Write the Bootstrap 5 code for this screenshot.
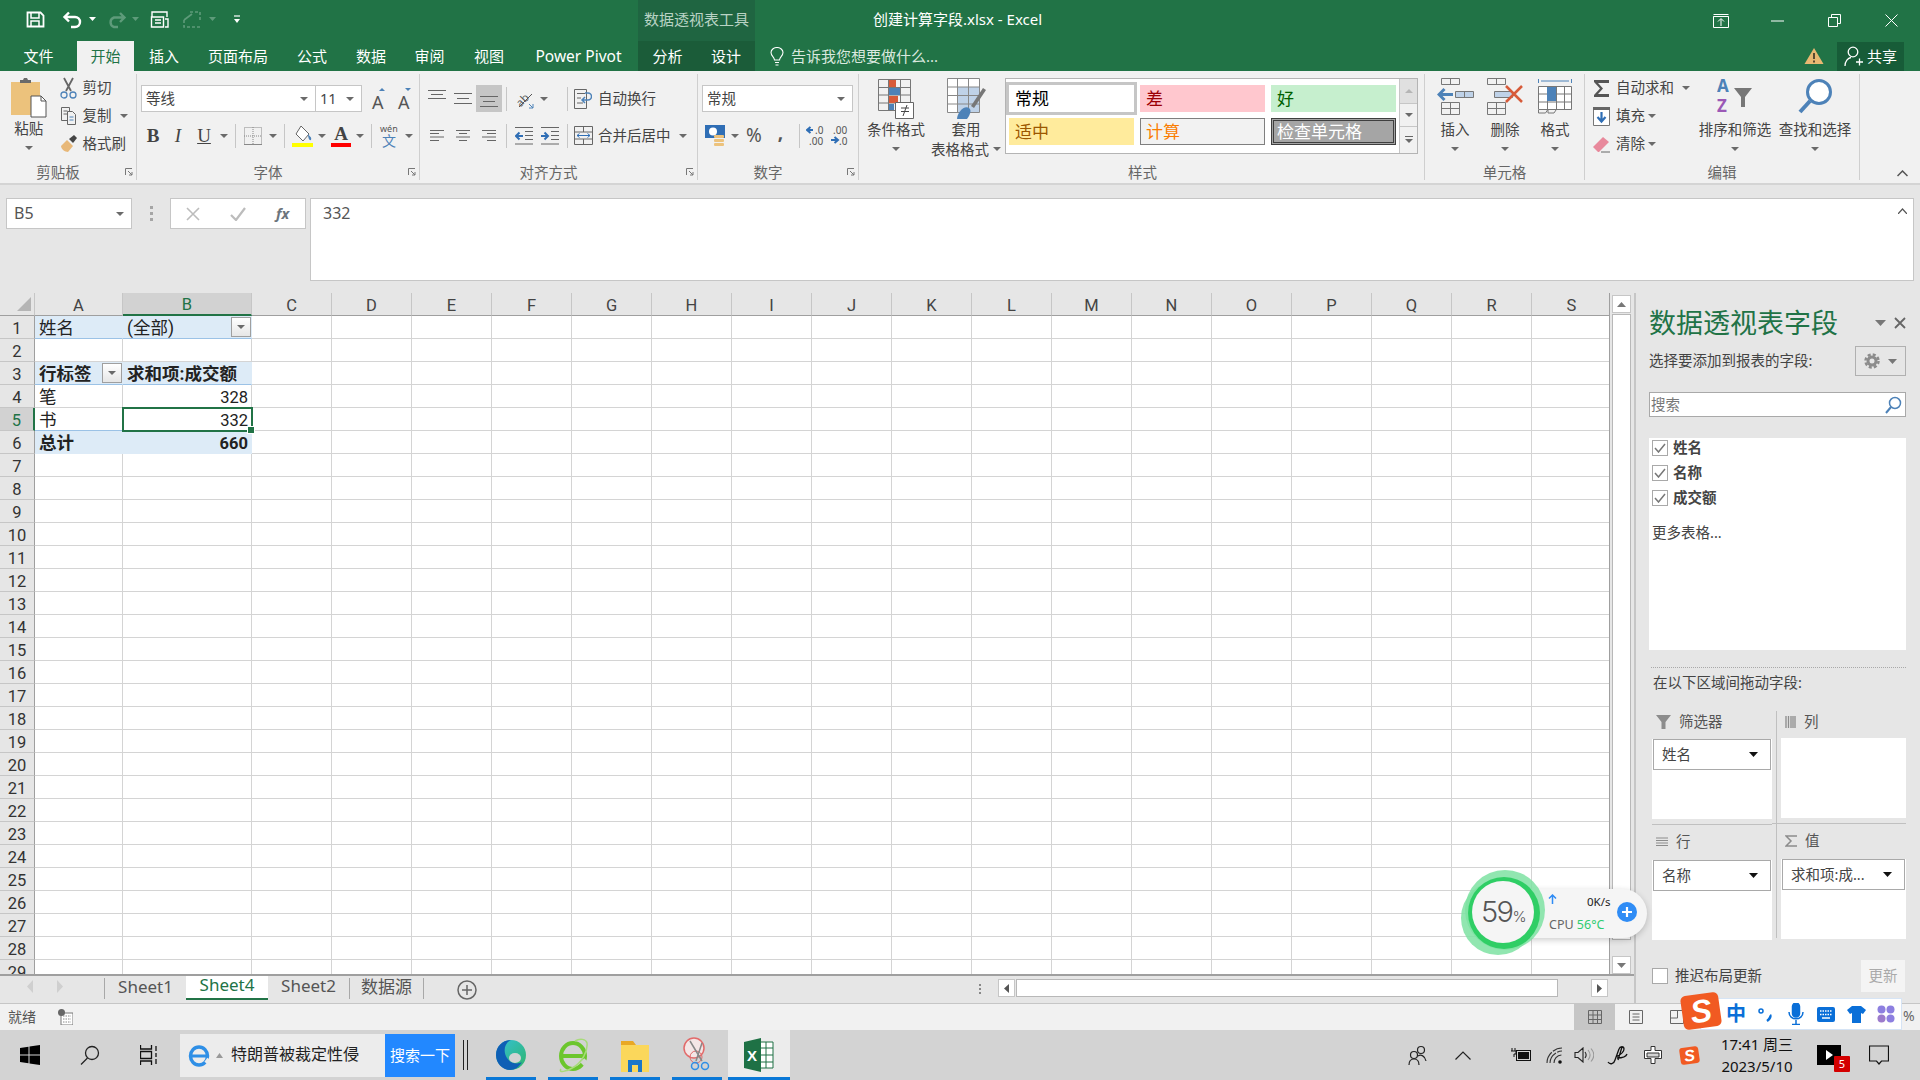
<!DOCTYPE html>
<html lang="zh-CN">
<head>
<meta charset="UTF-8">
<title>创建计算字段.xlsx - Excel</title>
<link rel="stylesheet" href="https://cdn.jsdelivr.net/npm/bootstrap@5.3.3/dist/css/bootstrap.min.css">
<script src="https://cdn.jsdelivr.net/npm/bootstrap@5.3.3/dist/js/bootstrap.bundle.min.js"></script>
<style>
html,body{margin:0;width:1920px;height:1080px;overflow:hidden}
body{font-family:"Noto Sans","Noto Sans CJK SC",sans-serif;font-size:14.5px;color:#444;background:#e6e6e6}
svg{display:block;flex:none}
.app{width:1920px;height:1080px;overflow:hidden}
.txt{white-space:nowrap;line-height:1.2}
.titlebar{height:41px;background:#217346;color:#fff}
.ctx-title{width:117px;height:41px;background:#1f6541;color:#b9d3c4;font-size:15px;padding-bottom:3px}
.doc-title{margin-left:118px;font-size:15px;padding-bottom:3px}
.winbtn{width:57px;height:41px}
.tabbar{height:30px;background:#217346;color:#fff;font-size:15px}
.rtab{height:30px}
.rtab.pp{font-size:15.5px}
.t77{width:77px}.t57{width:57px}.t60{width:60px}.t88{width:88px}.t58{width:58px}.t59{width:59px}.t119{width:119px}
.rtab.on{background:#f1f1f1;color:#217346}
.rtab.ctx{background:#1b5c39}
.tell{color:#d9e8df;margin-left:15px;font-size:15px}
.tell svg{margin-right:7px}
.warn{margin-right:13px}
.share{width:67px;height:29px;background:#175c38;margin-right:16px}
.ribbon{height:114px;background:#f1f1f1;border-bottom:2px solid #d4d4d4;padding-top:3px}
.rgroup{height:106px;border-right:1px solid #cfcfcf}
.g-clip{width:137px}.g-font{width:283px}.g-align{width:278px}.g-num{width:161px}.g-style{width:566px;padding-left:2px}.g-cell{width:160px}.g-edit{width:275px}
.rbody{height:87px}
.rlabel{height:19px;display:grid;grid-template-columns:1fr auto 1fr;align-items:center;color:#666;font-size:14.5px;line-height:1;padding-top:3px}
.rlabel.lnch{grid-template-columns:1fr 20px;text-align:center}
.rlabel svg{justify-self:end;margin-right:3px}
.col-paste{width:58px}
.paste-ico{margin:3px 0 0}
.col-small{width:79px}
.sm-row{height:28px}
.sm-ico{width:22px}
.sm-ico.sm20{width:20px}
.sm-row .txt{margin-left:3px}
.tri{width:0;height:0;border-left:4px solid transparent;border-right:4px solid transparent;border-top:4px solid #6a6a6a;flex:none}
.bigbtn{width:50px}
.bigbtn .big-ico{height:41px}
.big-h{height:41px}
.bigtxt{height:20px;line-height:20px;white-space:nowrap}
.bigcaret{height:20px}
.w70{width:70px}.w80{width:80px}.w110{width:110px}
.row1{height:27px;margin-top:11px}
.row2{height:27px;margin-top:10px}
.pad4{padding-left:4px}.pad5{padding-left:5px}
.combo{height:27px;background:#fff;border:1px solid #c6c6c6;padding:0 7px 0 4px;font-size:14.5px;color:#444}
.c-font{width:175px}.c-size{width:46px;border-left:0}.c-num{width:151px}
.ib{height:27px;flex:none}
.i14{width:14px}.i22{width:22px}.i24{width:24px}.i26{width:26px}.i29{width:29px}
.ib.act{background:#c6c6c6}
.vs{width:1px;height:24px;background:#c6c6c6;margin:0 4px;flex:none}
.vs.m17{margin-left:16px}
.m12{margin-left:12px}.m4{margin-left:4px}.m8{margin-left:8px}.m3{margin-left:3px}
.bi{font-family:"Liberation Serif",serif;font-size:19px;color:#444;line-height:1}
.pct{font-size:19px;color:#555;line-height:1}
.comma{padding-bottom:7px}
.gallery{width:413px;height:76px;margin:4px 0 0 4px;background:#fff;border:1px solid #b4b4b4}
.gal-cells{width:394px;padding:6px 0 0 3px;display:grid;grid-template-columns:125px 125px 125px;grid-auto-rows:27px;column-gap:6px;row-gap:6px}
.sty{font-size:17px;line-height:1.2;padding-left:6px;padding-top:1px;white-space:nowrap}
.s-norm{background:#fff;color:#000;box-shadow:0 0 0 3px #c6c6c6}
.s-bad{background:#ffc7ce;color:#9c0006}
.s-good{background:#c6efce;color:#006100}
.s-neu{background:#ffeb9c;color:#9c5700}
.s-calc{background:#f2f2f2;border:1px solid #7f7f7f;color:#fa7d00;padding-left:5px}
.s-chk{background:#a5a5a5;border:3px double #3f3f3f;color:#fff;padding-left:3px}
.gal-scroll{width:18px;border-left:1px solid #c6c6c6;background:#f1f1f1}
.gs1{height:25px;background:#e0e0e0;border-bottom:1px solid #c6c6c6}
.gs2{height:23px;border-bottom:1px solid #c6c6c6}
.gs3{flex:1}
.collapse-wrap{flex:1;padding:0 12px 6px 0}
.formula{height:108px;padding:13px 6px 0}
.fbox{background:#fff;border:1px solid #c6c6c6;height:31px}
.namebox{width:126px;padding:0 7px 0 7px;font-size:16px;color:#555}
.fdots{width:38px}
.fbtns{width:136px}
.fbtn{width:45px}
.fxline{width:1604px;height:83px;margin-left:4px;padding:5px 6px 0 12px;font-size:16px;color:#555}
.main{height:710px}
.leftcol{width:1634px}
.sheetarea{height:681px}
.gridwrap{width:1610px;height:681px;overflow:hidden;background:#fff;border-right:1px solid #9f9f9f}
.xl{table-layout:fixed;border-collapse:separate;border-spacing:0;width:1612px;font-family:Roboto,"Noto Sans CJK SC",sans-serif;font-size:17.5px;color:#222}
.xl col.c0{width:35px}.xl col.c1{width:88px}.xl col.c2{width:129px}.xl col.cn{width:80px}
.xl th,.xl td{height:23px;box-sizing:border-box;padding:4px 0 0;white-space:nowrap;line-height:1;vertical-align:middle}
.xl thead th{height:23px;background:#e6e6e6;border-right:1px solid #c6c6c6;border-bottom:1px solid #9f9f9f;text-align:center;font-weight:400;color:#444;font-size:16.5px}
.xl thead th.corner{padding:0}
.xl tbody th{background:#e6e6e6;border-right:1px solid #9f9f9f;border-bottom:1px solid #c6c6c6;text-align:center;font-weight:400;color:#333;font-size:16.5px}
.xl thead th.hsel{background:#d2d2d2;color:#217346;border-bottom:2px solid #217346}
.xl tbody th.hsel{background:#d2d2d2;color:#217346;border-right:2px solid #217346}
.xl td{border-right:1px solid #d4d4d4;border-bottom:1px solid #d4d4d4;padding:4px 3px 0 4px;overflow:hidden}
.xl td.pv{background:#ddebf7;border-right-color:#ddebf7;border-bottom-color:#ddebf7}
.xl td.pvb{border-bottom-color:#9bc2e6}
.xl td.fw{font-weight:700}
.xl td.ra{text-align:right;font-size:16.5px}
.xl td.bl{border-bottom-color:#9bc2e6}
.xl td.cur{position:relative;overflow:visible;outline:2px solid #217346;outline-offset:-1px}
.xl td.boxed{padding-top:0}
.fillh{position:absolute;right:-4px;bottom:-4px;width:6px;height:6px;background:#217346;border:1px solid #fff;z-index:3;box-sizing:content-box}
.cellin{display:flex;align-items:center;justify-content:space-between;height:22px}
.cellin .lbl{padding-top:4px}
.ddb{width:20px;height:20px;border:1px solid #9f9f9f;background:linear-gradient(#fff,#e6e6e6);margin-right:-3px;flex:none}
.vscroll{width:24px;height:681px;padding:2px 3px 0 2px;background:#e6e6e6}
.vbtn{height:18px;background:#fff;border:1px solid #c6c6c6;flex:none}
.vthumb{height:626px;background:#fff;border:1px solid #b8b8b8;margin-top:1px;flex:none}
.vgap{flex:1}
.sheettabs{height:29px;border-top:2px solid #9f9f9f;background:#e6e6e6;font-size:17px;color:#555}
.tabnav{width:104px;padding-left:27px;gap:24px}
.sht{line-height:1;white-space:nowrap}
.sht.s1{width:82px;border-left:1px solid #a8a8a8;height:21px;margin-top:2px;padding-bottom:5px}
.sht.s4{width:82px;height:24px;background:#fff;color:#217346;border-bottom:2px solid #217346;padding-bottom:6px}
.sht.s2{width:81px;height:25px;padding-bottom:7px}
.sht.s3{width:75px;border-left:1px solid #a8a8a8;border-right:1px solid #a8a8a8;height:21px;margin-top:2px;padding-bottom:5px}
.addsheet{margin-left:33px}
.hdots{margin-left:auto;width:19px}
.hs{height:18px;margin:3px 26px 0 0}
.hbtn{width:17px;height:18px;background:#fff;border:1px solid #c6c6c6}
.hthumb{width:542px;height:18px;background:#fff;border:1px solid #b8b8b8;margin-left:1px}
.hgap{width:33px}
.pane{width:286px;border-left:2px solid #c6c6c6;padding-left:13px;padding-right:14px;height:710px}
.pane-head{height:40px;margin-top:10px;flex:none}
.pane-title{font-size:27px;color:#217346;line-height:1.2;white-space:nowrap}
.pane-sel{height:30px;margin-top:3px;flex:none}
.gearbox{width:51px;height:30px;border:1px solid #b0b0b0}
.searchbox{height:25px;margin-top:16px;background:#fff;border:1px solid #a9a9a9;padding:0 3px 0 1px;color:#777;flex:none}
.fieldlist{height:212px;margin-top:21px;background:#fff;padding:0 3px;flex:none}
.fitem{height:20px;margin-bottom:5px;font-weight:700;color:#444;font-size:14.5px}
.cbx{width:16px;height:16px;border:1px solid #a9a9a9;background:#fff;margin-right:5px;flex:none}
.more{margin-top:16px;color:#444;font-size:14.5px}
.dotline{border-top:1px dotted #a9a9a9;margin:17px 0 0 2px;flex:none}
.droplabel{margin:4px 0 0 4px;height:20px;line-height:20px;color:#444;font-size:14.5px;flex:none}
.zones{margin:19px 0 0 3px;width:254px;height:227px;flex:none}
.zcol1{width:120px}
.zcol2{width:125px}
.zvline{width:9px;flex:none;display:flex;justify-content:center}
.zvline div{width:1px;height:100%;background:#c0c0c0}
.zhead{height:27px;color:#555;padding-bottom:5px}
.zhead.low{height:34px;padding-bottom:0}
.zhead svg{margin:0 8px 0 4px}
.zbox{height:80px;background:#fff}
.zdrop{height:31px;border:1px solid #a9a9a9;background:#fff;margin:1px 1px 0;padding:0 12px 0 8px;color:#444;font-size:14.5px}
.zmid{height:6px;border-bottom:1px solid #c0c0c0}
.zmid.toleft{margin-left:-9px}
.later{margin:22px 0 0 3px;height:32px;color:#444;flex:none}
.later .cbx{margin-right:7px}
.updatebtn{width:44px;height:32px;background:#f4f4f4;color:#aaa;margin-left:auto;margin-right:1px}
.statusbar{height:27px;background:#f1f1f1;border-top:1px solid #c6c6c6;padding-left:8px;color:#555;font-size:14px}
.st-ico{margin-left:22px}
.views{margin-left:auto;margin-right:223px}
.vw{height:26px;width:41px}
.vw.on{background:#c6c6c6}
.taskbar{height:50px;background:#d3d3d3;color:#111}
.tk{height:50px;width:60px;position:relative}
.tk-search{width:205px;height:43px;background:#ececec;padding-left:8px;font-size:16px;color:#222}
.tk-go{width:70px;height:43px;background:#2288ff;color:#fff;font-size:15px}
.tk-bars{width:5px;height:30px;border-left:1px solid #222;border-right:1px solid #222;margin:0 12px 0 8px}
.app-btn{width:62px;height:50px;position:relative}
.app-btn.run::after{content:"";position:absolute;left:6px;right:6px;bottom:0;height:3px;background:#0a78d7}
.app-btn.act{background:#ececec}
.app-btn.act::after{left:0;right:0}
.tray{margin-left:auto}
.tr{height:50px;width:36px}
.tr.w30{width:30px}
.tr.gap22{margin-right:22px}
.tr.gap9{margin-right:9px}
.clock{width:88px;font-size:15px;line-height:21px;text-align:center;color:#111;margin-left:6px}
.vidbox{position:relative;width:24px;height:20px;background:#000;margin:0 28px 0 16px}
.vidn{position:absolute;right:-9px;bottom:-7px;width:16px;height:16px;background:#d40000;color:#fff;font-size:11px;line-height:16px;text-align:center;border-radius:1px}
.action{margin-right:31px}
.widget{position:absolute;left:1460px;top:866px;width:190px;height:94px}
.wpill{position:absolute;left:60px;top:23px;width:127px;height:49px;border-radius:0 25px 25px 0;background:#f5f5f5;box-shadow:0 2px 6px rgba(0,0,0,.2)}
.wring{position:absolute;left:0;top:0}
.wpct{position:absolute;left:15px;top:26px;width:56px;text-align:center;font-family:Inter,sans-serif;font-size:29px;font-weight:300;letter-spacing:-1.500px;color:#555;line-height:40px;white-space:nowrap}
.wpct small{font-size:15px}
.wup{position:absolute;left:88px;top:28px}
.wspeed{position:absolute;left:127px;top:29px;font-size:11.500px;color:#222;line-height:14px}
.wcpu{position:absolute;left:89px;top:52px;font-size:12.500px;color:#666;line-height:14px;white-space:nowrap}
.wcpu span{color:#2ecc71}
.wplus{position:absolute;left:157px;top:36px;width:20px;height:20px;border-radius:50%;background:#2f8cf5;color:#fff}
.imebar{position:absolute;left:1700px;top:998px;width:202px;height:32px;background:#fff;border:1px solid #d6e4f5;padding-left:20px;color:#0a6fd8}
.ime-ico{width:31px}
.ime-zh{font-size:20px;font-weight:700;line-height:1.2}
.sogou{position:absolute;left:1682px;top:994px;width:38px;height:34px;background:#f15a22;border-radius:5px;transform:rotate(-8deg);color:#fff;font-family:"Liberation Sans",sans-serif;font-size:32px;font-weight:700;font-style:italic;text-align:center;line-height:34px}
.sogou-s{width:19px;height:17px;background:#f15a22;border-radius:3px;transform:rotate(-8deg);color:#fff;font-family:"Liberation Sans",sans-serif;font-size:16px;font-weight:700;font-style:italic;line-height:17px;text-align:center}
.pct-end{position:absolute;left:1903px;top:1006px;color:#666;font-size:14px;line-height:20px}
</style>
</head>
<body>
<div class="app position-relative d-flex flex-column">

  <!-- title bar -->
  <div class="titlebar d-flex align-items-center">
    <svg width="638" height="41" fill="none" stroke="#fff">
      <path d="M27.500 12.500h13l3 3v11h-16z" stroke-width="1.800"/><path d="M31 13v5h8v-5M31 27v-6h8v6" stroke-width="1.500"/>
      <path d="M69 12.500l-4.500 4.500 4.500 4.500M65 17h10a5 5 0 0 1 0 10h-4" stroke-width="2.400"/><path d="M89 17h7l-3.500 4z" fill="#fff" stroke="none"/>
      <path d="M120 13l4.500 4.500-4.500 4.500M124 17.500h-10a5 5 0 0 0 0 9.500h4" stroke="#5e9b7a" stroke-width="2.400"/><path d="M132 17h7l-3.500 4z" fill="#5e9b7a" stroke="none"/>
      <path d="M152 17v-5h15v5M151.500 17h12v10h-12zM155 20h6M155 23h6M165 19h3v8h-3" stroke-width="1.400"/>
      <path d="M184 20v7h16M190 12h10v10" stroke="#5e9b7a" stroke-width="1.600" stroke-dasharray="3 2"/><path d="M184 20l8-6" stroke="#5e9b7a" stroke-width="1.600"/><path d="M209 17h7l-3.500 4z" fill="#5e9b7a" stroke="none"/>
      <path d="M234 16h6" stroke-width="1.200"/><path d="M234 19h6l-3 4z" fill="#fff" stroke="none"/>
    </svg>
    <div class="ctx-title d-flex align-items-center justify-content-center txt">数据透视表工具</div>
    <div class="doc-title txt">创建计算字段.xlsx - Excel</div>
    <div class="ms-auto d-flex">
      <div class="winbtn d-flex align-items-center justify-content-center"><svg width="16" height="14" fill="none" stroke="#fff"><path d="M.5 2.500h15v11H.5zM.5 2.500h15M8 12V5M5 7.500L8 4.500l3 3"/><path d="M.5.500h15" stroke-width="1"/></svg></div>
      <div class="winbtn d-flex align-items-center justify-content-center"><svg width="13" height="2"><path d="M0 1h13" stroke="#fff"/></svg></div>
      <div class="winbtn d-flex align-items-center justify-content-center"><svg width="13" height="13" fill="none" stroke="#fff"><path d="M.5 3.500h9v9h-9zM3.500 3V.5h9v9H10"/></svg></div>
      <div class="winbtn d-flex align-items-center justify-content-center"><svg width="13" height="13" fill="none" stroke="#fff"><path d="M.5.500l12 12M12.500.500l-12 12"/></svg></div>
    </div>
  </div>

  <!-- ribbon tabs -->
  <div class="tabbar d-flex">
    <div class="rtab t77 d-flex align-items-center justify-content-center txt">文件</div>
    <div class="rtab on t57 d-flex align-items-center justify-content-center txt">开始</div>
    <div class="rtab t60 d-flex align-items-center justify-content-center txt">插入</div>
    <div class="rtab t88 d-flex align-items-center justify-content-center txt">页面布局</div>
    <div class="rtab t60 d-flex align-items-center justify-content-center txt">公式</div>
    <div class="rtab t58 d-flex align-items-center justify-content-center txt">数据</div>
    <div class="rtab t59 d-flex align-items-center justify-content-center txt">审阅</div>
    <div class="rtab t60 d-flex align-items-center justify-content-center txt">视图</div>
    <div class="rtab pp t119 d-flex align-items-center justify-content-center txt">Power Pivot</div>
    <div class="rtab ctx t59 d-flex align-items-center justify-content-center txt">分析</div>
    <div class="rtab ctx t58 d-flex align-items-center justify-content-center txt">设计</div>
    <div class="tell d-flex align-items-center txt">
      <svg width="14" height="19" fill="none" stroke="#fff" stroke-width="1.100"><path d="M4.500 13c0-3-3.500-4-3.500-7.500a6 5 0 0 1 12 0C13 9 9.500 10 9.500 13zM5 15.500h4M5.500 18h3"/></svg>告诉我您想要做什么...
    </div>
    <div class="ms-auto d-flex align-items-center">
      <svg class="warn" width="20" height="18"><path d="M10 1l9.500 16H.5z" fill="#e9b872"/><path d="M9 6h2v6H9zM9 13.500h2v2H9z" fill="#5a4a30"/></svg>
      <div class="share d-flex align-items-center justify-content-center gap-1 txt">
        <svg width="19" height="21" fill="none" stroke="#fff" stroke-width="1.300"><circle cx="9" cy="6" r="4.800"/><path d="M1 20c0-5 3-8 6-8.500M12 16h7M15.500 12.500v7"/></svg>共享
      </div>
    </div>
  </div>

  <!-- ribbon -->
  <div class="ribbon d-flex">
    <div class="rgroup g-clip d-flex flex-column">
      <div class="rbody d-flex">
        <div class="col-paste d-flex flex-column align-items-center">
          <svg class="paste-ico" width="36" height="41"><rect x="0" y="5" width="29" height="33" fill="#ecc27c"/><path d="M9 6V3h3l1-2h3l1 2h3v3z" fill="#6a6a6a"/><path d="M20 19h10l5 5v16H20z" fill="#fff" stroke="#555"/><path d="M30 19v5h5" fill="none" stroke="#555"/></svg>
          <div class="bigtxt">粘贴</div>
          <div class="bigcaret d-flex align-items-center"><span class="tri"></span></div>
        </div>
        <div class="col-small">
          <div class="sm-row d-flex align-items-center"><div class="sm-ico d-flex justify-content-center"><svg width="17" height="22" fill="none"><path d="M4 1l7 13M13 1L6 14" stroke="#666" stroke-width="1.800"/><circle cx="4" cy="18" r="3" stroke="#4d82b8" stroke-width="1.300"/><circle cx="13" cy="18" r="3" stroke="#4d82b8" stroke-width="1.300"/></svg></div><span class="txt">剪切</span></div>
          <div class="sm-row d-flex align-items-center"><div class="sm-ico d-flex justify-content-center"><svg width="17" height="20" fill="none" stroke="#666"><path d="M1.500 1.500h8v13h-8z"/><path d="M3.500 5h4M3.500 8h4"/><path d="M7.500 5.500h5l3 3v10h-8z" fill="#f1f1f1"/><path d="M9.500 11h4M9.500 14h4" stroke="#4d82b8"/></svg></div><span class="txt">复制</span><span class="tri m8"></span></div>
          <div class="sm-row d-flex align-items-center"><div class="sm-ico d-flex justify-content-center"><svg width="18" height="18"><path d="M1 11l6-6 6 6-5 6c-3 0-7-3-7-6z" fill="#e8b878"/><path d="M9 4l5-4 3 3-4 5z" fill="#444"/></svg></div><span class="txt">格式刷</span></div>
        </div>
      </div>
      <div class="rlabel lnch"><span>剪贴板</span><svg width="8" height="8" fill="none" stroke="#777"><path d="M.5 7V.5H7M3 3l4 4M7 4v3H4"/></svg></div>
    </div>

    <div class="rgroup g-font d-flex flex-column">
      <div class="rbody">
        <div class="row1 pad4 d-flex align-items-center">
          <div class="combo c-font d-flex align-items-center justify-content-between"><span class="txt">等线</span><span class="tri"></span></div>
          <div class="combo c-size d-flex align-items-center justify-content-between"><span class="txt">11</span><span class="tri"></span></div>
          <div class="ib i26 m4 d-flex align-items-center justify-content-center"><svg width="18" height="22"><text x="2" y="21" font-family="Noto Sans" font-size="18" fill="#555">A</text><path d="M9 3l3-3 3 3z" fill="#4d82b8"/></svg></div>
          <div class="ib i26 d-flex align-items-center justify-content-center"><svg width="18" height="22"><text x="2" y="21" font-family="Noto Sans" font-size="18" fill="#555">A</text><path d="M9 0l3 3 3-3z" fill="#4d82b8"/></svg></div>
        </div>
        <div class="row2 pad4 d-flex align-items-center">
          <div class="ib i24 d-flex align-items-center justify-content-center bi fw-bold">B</div>
          <div class="ib i26 d-flex align-items-center justify-content-center bi fst-italic">I</div>
          <div class="ib i26 d-flex align-items-center justify-content-center bi text-decoration-underline">U</div>
          <div class="ib i14 d-flex align-items-center justify-content-center"><span class="tri"></span></div>
          <div class="vs"></div>
          <div class="ib i26 d-flex align-items-center justify-content-center"><svg width="18" height="18" fill="none" stroke="#888" stroke-dasharray="1 1"><path d="M.5.500h17v17H.5zM9 0v18M0 9h18"/><path d="M0 17.500h18" stroke-dasharray="none"/></svg></div>
          <div class="ib i14 d-flex align-items-center justify-content-center"><span class="tri"></span></div>
          <div class="vs"></div>
          <div class="ib i26 d-flex align-items-center justify-content-center"><svg width="21" height="23"><path d="M9 2l8 8-6 7-7-7z" fill="#fff" stroke="#666"/><path d="M9 2V0M16 10c2 3 4 3 3 6-2 1-3-3-3-6z" fill="#4d82b8"/><rect x="0" y="19" width="21" height="4" fill="#ff0"/></svg></div>
          <div class="ib i14 d-flex align-items-center justify-content-center"><span class="tri"></span></div>
          <div class="ib i24 d-flex flex-column align-items-center justify-content-center"><span class="bi fw-bold lh-1">A</span><svg width="20" height="4"><rect width="20" height="4" fill="#f00"/></svg></div>
          <div class="ib i14 d-flex align-items-center justify-content-center"><span class="tri"></span></div>
          <div class="vs"></div>
          <div class="ib i26 d-flex align-items-center justify-content-center"><svg width="20" height="25"><text x="1" y="9" font-family="Noto Sans" font-size="9" fill="#555">wén</text><text x="3" y="23" font-family="Noto Sans CJK SC" font-size="14" fill="#4d82b8">文</text></svg></div>
          <div class="ib i14 d-flex align-items-center justify-content-center"><span class="tri"></span></div>
        </div>
      </div>
      <div class="rlabel lnch"><span>字体</span><svg width="8" height="8" fill="none" stroke="#777"><path d="M.5 7V.5H7M3 3l4 4M7 4v3H4"/></svg></div>
    </div>

    <div class="rgroup g-align d-flex flex-column">
      <div class="rbody">
        <div class="row1 pad4 d-flex align-items-center">
          <div class="ib i26 d-flex align-items-start justify-content-center"><svg width="18" height="12" class="mt-1" stroke="#666"><path d="M0 1.500h18M3 5.500h12M0 9.500h18"/></svg></div>
          <div class="ib i26 d-flex align-items-center justify-content-center"><svg width="18" height="13" stroke="#666"><path d="M0 1.500h18M3 6.500h12M0 11.500h18"/></svg></div>
          <div class="ib i26 act d-flex align-items-end justify-content-center"><svg width="18" height="13" class="mb-1" stroke="#666"><path d="M0 1.500h18M3 6.500h12M0 11.500h18"/></svg></div>
          <div class="vs"></div>
          <div class="ib i26 d-flex align-items-center justify-content-center"><svg width="22" height="24" fill="none" stroke="#555"><text x="2" y="17" transform="rotate(-45 9 12)" font-family="Noto Sans" font-size="11" fill="#555" stroke="none">ab</text><path d="M6 20L19 7"/><path d="M16 17l4 4M20 17v4h-4" stroke="#4d82b8"/></svg></div>
          <div class="ib i14 d-flex align-items-center justify-content-center"><span class="tri"></span></div>
          <div class="vs m17"></div>
          <div class="ib i22 d-flex align-items-center justify-content-center"><svg width="18" height="22" fill="none" stroke="#666"><path d="M.5 1.500h12v19H.5zM3 5.500h8M3 10h4M3 15h6"/><path d="M9 12h5a3 3 0 0 0 0-7h-3M11 9l-3 3 3 3" stroke="#4d82b8" stroke-width="1.500"/></svg></div>
          <span class="txt m4">自动换行</span>
        </div>
        <div class="row2 pad4 d-flex align-items-center">
          <div class="ib i26 d-flex align-items-center justify-content-center"><svg width="14" height="13" stroke="#666"><path d="M0 1.500h14M0 4.500h9M0 8h14M0 11.500h9"/></svg></div>
          <div class="ib i26 d-flex align-items-center justify-content-center"><svg width="14" height="13" stroke="#666"><path d="M0 1.500h14M3 4.500h8M0 8h14M3 11.500h8"/></svg></div>
          <div class="ib i26 d-flex align-items-center justify-content-center"><svg width="14" height="13" stroke="#666"><path d="M0 1.500h14M5 4.500h9M0 8h14M5 11.500h9"/></svg></div>
          <div class="vs"></div>
          <div class="ib i26 d-flex align-items-center justify-content-center"><svg width="18" height="18" stroke="#666" fill="none"><path d="M0 .5h18M10 4.500h8M10 8.500h8M10 12.500h8M0 17h18"/><path d="M8 9H1M4.500 5.500L1 9l3.500 3.500" stroke="#2f6eb5" stroke-width="2"/></svg></div>
          <div class="ib i26 d-flex align-items-center justify-content-center"><svg width="18" height="18" stroke="#666" fill="none"><path d="M0 .5h18M10 4.500h8M10 8.500h8M10 12.500h8M0 17h18"/><path d="M0 9h7M3.500 5.500L7 9l-3.500 3.500" stroke="#2f6eb5" stroke-width="2"/></svg></div>
          <div class="vs"></div>
          <div class="ib i22 d-flex align-items-center justify-content-center"><svg width="19" height="19" fill="none" stroke="#666"><path d="M.5.500h18v18H.5zM0 6h19M0 13h19M9.500 0v6M9.500 13v6"/><path d="M3 9.500h13M5.500 7.500L3 9.500l2.500 2M13.500 7.500l2.500 2-2.500 2" stroke="#2f6eb5"/></svg></div>
          <span class="txt m4">合并后居中</span><span class="tri ms-2"></span>
        </div>
      </div>
      <div class="rlabel lnch"><span>对齐方式</span><svg width="8" height="8" fill="none" stroke="#777"><path d="M.5 7V.5H7M3 3l4 4M7 4v3H4"/></svg></div>
    </div>

    <div class="rgroup g-num d-flex flex-column">
      <div class="rbody">
        <div class="row1 pad4 d-flex align-items-center">
          <div class="combo c-num d-flex align-items-center justify-content-between"><span class="txt">常规</span><span class="tri"></span></div>
        </div>
        <div class="row2 pad4 d-flex align-items-center">
          <div class="ib i26 d-flex align-items-center justify-content-center"><svg width="20" height="21"><rect width="20" height="13" fill="#2f6eb5"/><circle cx="8" cy="6.500" r="4" fill="#fff"/><rect x="9" y="10" width="10" height="3" rx="1" fill="#ecc27c"/><rect x="9" y="14" width="10" height="3" rx="1" fill="#ecc27c"/><rect x="9" y="18" width="10" height="3" rx="1" fill="#ecc27c"/></svg></div>
          <div class="ib i14 d-flex align-items-center justify-content-center"><span class="tri"></span></div>
          <div class="ib i24 d-flex align-items-center justify-content-center pct">%</div>
          <div class="ib i29 d-flex align-items-center justify-content-center pct comma fw-bold">,</div>
          <div class="vs"></div>
          <div class="ib i24 d-flex align-items-center justify-content-center"><svg width="20" height="22"><path d="M7 5H2M4.500 2L1 5l3.500 3" fill="none" stroke="#2f6eb5" stroke-width="2"/><text x="9" y="9" font-family="Noto Sans" font-size="10" fill="#555">.0</text><text x="3" y="20" font-family="Noto Sans" font-size="10" fill="#555">.00</text></svg></div>
          <div class="ib i24 d-flex align-items-center justify-content-center"><svg width="20" height="22"><text x="3" y="9" font-family="Noto Sans" font-size="10" fill="#555">.00</text><path d="M1 15h6M4.500 12L8 15l-3.500 3" fill="none" stroke="#2f6eb5" stroke-width="2"/><text x="9" y="20" font-family="Noto Sans" font-size="10" fill="#555">.0</text></svg></div>
        </div>
      </div>
      <div class="rlabel lnch"><span>数字</span><svg width="8" height="8" fill="none" stroke="#777"><path d="M.5 7V.5H7M3 3l4 4M7 4v3H4"/></svg></div>
    </div>

    <div class="rgroup g-style d-flex flex-column">
      <div class="rbody d-flex">
        <div class="w70 d-flex flex-column align-items-center">
          <div class="big-h d-flex align-items-start mt-1"><svg width="38" height="41" fill="none" stroke="#777"><path d="M1.500 1.500h32v31h-32zM11.500 1.500v31M23.500 1.500v31M1.500 9.500h32M1.500 17h32M1.500 25h32"/><path d="M12 2h7v7h-7z" fill="#d75b3a" stroke="none"/><path d="M12 10h11v7H12z" fill="#4d82b8" stroke="none"/><path d="M12 18h9v7h-9z" fill="#d75b3a" stroke="none"/><path d="M12 26h5v6h-5z" fill="#4d82b8" stroke="none"/><path d="M18.500 24.500h18v16h-18z" fill="#fff" stroke="#666"/><path d="M24 33.500h8M24 30h8M30 27l-4 11" stroke="#444"/></svg></div>
          <div class="bigtxt">条件格式</div>
          <div class="bigcaret d-flex align-items-center"><span class="tri"></span></div>
        </div>
        <div class="w70 d-flex flex-column align-items-center">
          <div class="big-h d-flex align-items-start mt-1"><svg width="39" height="41" fill="none" stroke="#888"><path d="M.5.500h32v34H.5z" fill="#fff"/><path d="M10 9h22v25H10z" fill="#bfd2e8" stroke="none"/><path d="M.5 9h32M.5 17.500h32M.5 26h32M10.500.5v34M21.500.5v34"/><path d="M24 28L36 10l3 2-12 18z" fill="#777" stroke="none"/><path d="M10 41c0-6 7-14 12-11 3 2 1 7-2 11z" fill="#4d82b8" stroke="none"/></svg></div>
          <div class="bigtxt">套用</div>
          <div class="bigtxt d-flex align-items-center gap-1">表格格式<span class="tri"></span></div>
        </div>
        <div class="gallery d-flex">
          <div class="gal-cells">
            <div class="sty s-norm d-flex align-items-center">常规</div>
            <div class="sty s-bad d-flex align-items-center">差</div>
            <div class="sty s-good d-flex align-items-center">好</div>
            <div class="sty s-neu d-flex align-items-center">适中</div>
            <div class="sty s-calc d-flex align-items-center">计算</div>
            <div class="sty s-chk d-flex align-items-center">检查单元格</div>
          </div>
          <div class="gal-scroll d-flex flex-column">
            <div class="gs1 d-flex align-items-center justify-content-center"><svg width="8" height="4"><path d="M0 4l4-4 4 4z" fill="#b5b5b5"/></svg></div>
            <div class="gs2 d-flex align-items-center justify-content-center"><span class="tri"></span></div>
            <div class="gs3 d-flex flex-column align-items-center justify-content-center"><svg width="8" height="8"><path d="M0 .5h8" stroke="#666"/><path d="M0 3l4 4 4-4z" fill="#6a6a6a"/></svg></div>
          </div>
        </div>
      </div>
      <div class="rlabel"><span></span><span>样式</span><span></span></div>
    </div>

    <div class="rgroup g-cell d-flex flex-column">
      <div class="rbody pad5 d-flex">
        <div class="bigbtn d-flex flex-column align-items-center">
          <div class="big-ico d-flex align-items-start mt-1"><svg width="37" height="37" fill="none" stroke="#777"><path d="M4.500.500h18v6h-18zM13.500.5v6"/><path d="M18.500 13.500h18v6h-18z" fill="#bfd2e8"/><path d="M27.500 13.500v6"/><path d="M4.500 24.500h18v12h-18zM13.500 24.500v12M4.500 30.500h18"/><path d="M16 16.500H2M7.500 11L2 16.500 7.500 22" stroke="#4d82b8" stroke-width="3"/></svg></div>
          <div class="bigtxt">插入</div>
          <div class="bigcaret d-flex align-items-center"><span class="tri"></span></div>
        </div>
        <div class="bigbtn d-flex flex-column align-items-center">
          <div class="big-ico d-flex align-items-start mt-1"><svg width="37" height="37" fill="none" stroke="#777"><path d="M.5.500h18v6H.5zM9.500.5v6"/><path d="M7.500 13.500h18v6h-18z" fill="#bfd2e8"/><path d="M.5 24.500h18v12H.5zM9.500 24.500v12M.5 30.500h18"/><path d="M19 8l16 16M35 8L19 24" stroke="#d75b3a" stroke-width="2.500"/></svg></div>
          <div class="bigtxt">删除</div>
          <div class="bigcaret d-flex align-items-center"><span class="tri"></span></div>
        </div>
        <div class="bigbtn d-flex flex-column align-items-center">
          <div class="big-ico d-flex align-items-start mt-1"><svg width="35" height="38" fill="none" stroke="#777"><path d="M.5 8.500h33v23H.5z" fill="#fff"/><path d="M.5 16h33M.5 24h33M9.500 8.500v23M18.500 8.500v23M26.500 8.500v23"/><path d="M9 9h9v14H9z" fill="#4d82b8" stroke="none"/><path d="M.5 1v4M33.500 1v4M3 3h28" stroke="#4d82b8"/><path d="M.5 32v3h7l2-3M10 32v3h6l2-3" /></svg></div>
          <div class="bigtxt">格式</div>
          <div class="bigcaret d-flex align-items-center"><span class="tri"></span></div>
        </div>
      </div>
      <div class="rlabel"><span></span><span>单元格</span><span></span></div>
    </div>

    <div class="rgroup g-edit d-flex flex-column">
      <div class="rbody d-flex">
        <div class="w110 ps-2">
          <div class="sm-row d-flex align-items-center"><div class="sm-ico sm20 d-flex"><svg width="17" height="17"><path d="M1 0h15v3H5l5 5.500L5 14h11v3H1v-2l6-6.500L1 2z" fill="#555"/></svg></div><span class="txt">自动求和</span><span class="tri ms-2"></span></div>
          <div class="sm-row d-flex align-items-center"><div class="sm-ico sm20 d-flex"><svg width="17" height="19"><path d="M.5 2.500h16v16H.5z" fill="#fff" stroke="#777"/><path d="M0 0h17v3H0z" fill="#666"/><path d="M8.500 5v9M4.500 10l4 4.500 4-4.500" fill="none" stroke="#2f6eb5" stroke-width="2.200"/></svg></div><span class="txt">填充</span><span class="tri m3"></span></div>
          <div class="sm-row d-flex align-items-center"><div class="sm-ico sm20 d-flex"><svg width="18" height="17"><path d="M0 11L10 1l6 5-10 10H5z" fill="#e8899c"/><path d="M8 16h9" stroke="#666"/></svg></div><span class="txt">清除</span><span class="tri m3"></span></div>
        </div>
        <div class="w80 d-flex flex-column align-items-center">
          <div class="big-h d-flex align-items-start mt-1"><svg width="36" height="38"><text x="0" y="14" font-family="Noto Sans" font-weight="700" font-size="17" fill="#4d82b8">A</text><text x="0" y="34" font-family="Noto Sans" font-weight="700" font-size="17" fill="#9b59b6">Z</text><path d="M17 10h18l-7 9v10h-4V19z" fill="#777"/></svg></div>
          <div class="bigtxt">排序和筛选</div>
          <div class="bigcaret d-flex align-items-center"><span class="tri"></span></div>
        </div>
        <div class="w80 d-flex flex-column align-items-center">
          <div class="big-h d-flex align-items-start mt-1"><svg width="36" height="38" fill="none" stroke="#4d82b8"><circle cx="22" cy="14" r="11.500" stroke-width="3" fill="#fff"/><path d="M13 23L3 34" stroke-width="4"/></svg></div>
          <div class="bigtxt">查找和选择</div>
          <div class="bigcaret d-flex align-items-center"><span class="tri"></span></div>
        </div>
      </div>
      <div class="rlabel"><span></span><span>编辑</span><span></span></div>
    </div>
    <div class="collapse-wrap d-flex align-items-end justify-content-end"><svg width="11" height="7" fill="none" stroke="#555" stroke-width="1.500"><path d="M.5 6l5-5 5 5"/></svg></div>
  </div>

  <!-- formula bar -->
  <div class="formula d-flex align-items-start">
    <div class="fbox namebox d-flex align-items-center justify-content-between"><span class="txt">B5</span><span class="tri"></span></div>
    <div class="fdots d-flex justify-content-center pt-2"><svg width="3" height="15"><path d="M0 0h3v3H0zM0 6h3v3H0zM0 12h3v3H0z" fill="#a5a5a5"/></svg></div>
    <div class="fbox fbtns d-flex align-items-center">
      <div class="fbtn d-flex justify-content-center"><svg width="14" height="14" fill="none" stroke="#bcbcbc" stroke-width="1.600"><path d="M1 1l12 12M13 1L1 13"/></svg></div>
      <div class="fbtn d-flex justify-content-center"><svg width="16" height="14" fill="none" stroke="#bcbcbc" stroke-width="2.200"><path d="M1 8l5 5L15 1"/></svg></div>
      <div class="fbtn d-flex justify-content-center txt fst-italic fw-bold text-secondary">fx</div>
    </div>
    <div class="fbox fxline d-flex justify-content-between"><span class="txt">332</span><svg width="9" height="6" class="mt-1"><path d="M0 6l4.500-5 4.500 5" fill="none" stroke="#555" stroke-width="1.200"/></svg></div>
  </div>

  <!-- sheet + pivot pane -->
  <div class="main d-flex">
    <div class="leftcol d-flex flex-column">
      <div class="sheetarea d-flex">
        <div class="gridwrap"><table class="xl" id="sheetTable"></table></div>
        <div class="vscroll d-flex flex-column">
          <div class="vbtn d-flex align-items-center justify-content-center"><svg width="9" height="5"><path d="M0 5l4.500-5L9 5z" fill="#777"/></svg></div>
          <div class="vthumb"></div>
          <div class="vgap"></div>
          <div class="vbtn d-flex align-items-center justify-content-center"><svg width="9" height="5"><path d="M0 0l4.500 5L9 0z" fill="#777"/></svg></div>
        </div>
      </div>
      <div class="sheettabs d-flex align-items-start">
        <div class="tabnav d-flex align-items-center pt-1">
          <svg width="6" height="13"><path d="M6 0L0 6.500 6 13z" fill="#cfcfcf"/></svg>
          <svg width="6" height="13"><path d="M0 0l6 6.500L0 13z" fill="#cfcfcf"/></svg>
        </div>
        <div class="sht s1 d-flex align-items-center justify-content-center">Sheet1</div>
        <div class="sht s4 d-flex align-items-center justify-content-center">Sheet4</div>
        <div class="sht s2 d-flex align-items-center justify-content-center">Sheet2</div>
        <div class="sht s3 d-flex align-items-center justify-content-center">数据源</div>
        <svg class="addsheet mt-1" width="20" height="20" fill="none" stroke="#666"><circle cx="10" cy="10" r="9" stroke-width="1.500"/><path d="M10 5v10M5 10h10" stroke-width="1.500"/></svg>
        <div class="hdots d-flex justify-content-start mt-1 pt-1"><svg width="3" height="11"><path d="M0 0h2v2H0zM0 4h2v2H0zM0 8h2v2H0z" fill="#888"/></svg></div>
        <div class="hs d-flex">
          <div class="hbtn d-flex align-items-center justify-content-center"><svg width="5" height="9"><path d="M5 0L0 4.500 5 9z" fill="#555"/></svg></div>
          <div class="hthumb"></div>
          <div class="hgap"></div>
          <div class="hbtn d-flex align-items-center justify-content-center"><svg width="5" height="9"><path d="M0 0l5 4.500L0 9z" fill="#555"/></svg></div>
        </div>
      </div>
    </div>

    <div class="pane d-flex flex-column">
      <div class="pane-head d-flex align-items-center justify-content-between">
        <div class="pane-title">数据透视表字段</div>
        <div class="d-flex align-items-center gap-2"><svg width="11" height="6"><path d="M0 0h11L5.500 6z" fill="#777"/></svg><svg width="12" height="12" fill="none" stroke="#666" stroke-width="1.800"><path d="M1 1l10 10M11 1L1 11"/></svg></div>
      </div>
      <div class="pane-sel d-flex align-items-center justify-content-between">
        <span class="txt">选择要添加到报表的字段:</span>
        <div class="gearbox d-flex align-items-center justify-content-center gap-2">
          <svg width="16" height="16" fill="none" stroke="#8c8c8c"><circle cx="8" cy="8" r="4" stroke-width="3"/><circle cx="8" cy="8" r="6.500" stroke-width="2.500" stroke-dasharray="3 2.100"/></svg>
          <svg width="9" height="5"><path d="M0 0h9L4.500 5z" fill="#777"/></svg>
        </div>
      </div>
      <div class="searchbox d-flex align-items-center justify-content-between"><span class="txt">搜索</span>
        <svg width="18" height="18" fill="none" stroke="#4d82b8"><circle cx="11" cy="7" r="5.500" stroke-width="1.500"/><path d="M7 11l-5 6" stroke-width="2"/></svg>
      </div>
      <div class="fieldlist">
        <div class="fitem d-flex align-items-center"><span class="cbx d-flex align-items-center justify-content-center"><svg width="12" height="10" fill="none" stroke="#777" stroke-width="1.500"><path d="M1 5l3.500 4L11 1"/></svg></span><span class="txt">姓名</span></div>
        <div class="fitem d-flex align-items-center"><span class="cbx d-flex align-items-center justify-content-center"><svg width="12" height="10" fill="none" stroke="#777" stroke-width="1.500"><path d="M1 5l3.500 4L11 1"/></svg></span><span class="txt">名称</span></div>
        <div class="fitem d-flex align-items-center"><span class="cbx d-flex align-items-center justify-content-center"><svg width="12" height="10" fill="none" stroke="#777" stroke-width="1.500"><path d="M1 5l3.500 4L11 1"/></svg></span><span class="txt">成交额</span></div>
        <div class="more txt">更多表格...</div>
      </div>
      <div class="dotline"></div>
      <div class="droplabel txt">在以下区域间拖动字段:</div>
      <div class="zones d-flex">
        <div class="zcol1">
          <div class="zhead d-flex align-items-center"><svg width="15" height="14"><path d="M0 0h15L9.500 7v7h-4V7z" fill="#8c8c8c"/></svg><span class="txt">筛选器</span></div>
          <div class="zbox"><div class="zdrop d-flex align-items-center justify-content-between"><span class="txt">姓名</span><svg width="9" height="5"><path d="M0 0h9L4.500 5z" fill="#111"/></svg></div></div>
          <div class="zmid"></div>
          <div class="zhead low d-flex align-items-center"><svg width="12" height="10" stroke="#8c8c8c"><path d="M0 1h12M0 3.500h12M0 6h12M0 8.500h12" stroke-width="1.200"/></svg><span class="txt">行</span></div>
          <div class="zbox"><div class="zdrop d-flex align-items-center justify-content-between"><span class="txt">名称</span><svg width="9" height="5"><path d="M0 0h9L4.500 5z" fill="#111"/></svg></div></div>
        </div>
        <div class="zvline"><div></div></div>
        <div class="zcol2">
          <div class="zhead d-flex align-items-center"><svg width="11" height="12" stroke="#8c8c8c" fill="none"><path d="M1 0v12M3.500 0v12M6 0v12M8 0v12M10 0v12" stroke-width="1.300"/></svg><span class="txt">列</span></div>
          <div class="zbox"></div>
          <div class="zmid toleft"></div>
          <div class="zhead low d-flex align-items-center"><svg width="12" height="12" fill="none" stroke="#8c8c8c" stroke-width="1.500"><path d="M12 1H1l5 5-5 5h11"/></svg><span class="txt">值</span></div>
          <div class="zbox"><div class="zdrop d-flex align-items-center justify-content-between"><span class="txt">求和项:成...</span><svg width="9" height="5"><path d="M0 0h9L4.500 5z" fill="#111"/></svg></div></div>
        </div>
      </div>
      <div class="later d-flex align-items-center"><span class="cbx"></span><span class="txt">推迟布局更新</span>
        <div class="updatebtn d-flex align-items-center justify-content-center txt">更新</div>
      </div>
    </div>
  </div>

  <!-- status bar -->
  <div class="statusbar d-flex align-items-center">
    <span class="txt">就绪</span>
    <svg class="st-ico" width="15" height="16"><path d="M3 4h12v12H3z" fill="#fff" stroke="#777"/><circle cx="3.500" cy="3.500" r="3.500" fill="#666"/><path d="M5 7h8M5 10h8M5 13h8" stroke="#888" stroke-dasharray="1.500 1"/></svg>
    <div class="views d-flex">
      <div class="vw on d-flex align-items-center justify-content-center"><svg width="14" height="14" fill="none" stroke="#666"><path d="M.5.500h13v13H.5zM.5 5h13M.5 9.500h13M5 .5v13M9.500.5v13"/></svg></div>
      <div class="vw d-flex align-items-center justify-content-center"><svg width="14" height="14" fill="none" stroke="#666"><path d="M.5.500h13v13H.5zM3.500 4h7M3.500 7h7M3.500 10h7"/></svg></div>
      <div class="vw d-flex align-items-center justify-content-center"><svg width="14" height="14" fill="none" stroke="#666"><path d="M.5.500h13v13H.5zM.5 8h7V.5"/></svg></div>
    </div>
  </div>

  <!-- windows taskbar -->
  <div class="taskbar d-flex align-items-center">
    <div class="tk d-flex align-items-center justify-content-center"><svg width="20" height="20" fill="#000"><path d="M0 3l8.500-1.300V9.500H0zM9.500 1.500L20 0v9.500H9.500zM0 10.500h8.500v7.800L0 17zM9.500 10.500H20V20L9.500 18.500z"/></svg></div>
    <div class="tk d-flex align-items-center justify-content-center"><svg width="20" height="20" fill="none" stroke="#222" stroke-width="1.300"><circle cx="12" cy="8" r="6.500"/><path d="M7.500 13L1 19.500"/></svg></div>
    <div class="tk d-flex align-items-center justify-content-center"><svg width="20" height="20" fill="none" stroke="#111" stroke-width="1.300"><path d="M.5 0v4h11V0M.5 20v-4h11v4M.5 6.500h11v7H.5zM16 1v5M16 8v4M16 14v5"/></svg></div>
    <div class="tk-search d-flex align-items-center">
      <svg width="24" height="28" fill="none"><ellipse cx="11" cy="15" rx="8.500" ry="9" stroke="#2f8fe6" stroke-width="3.500"/><path d="M3 15h16" stroke="#2f8fe6" stroke-width="3"/><path d="M18 22L21 18" stroke="#ececec" stroke-width="4"/></svg>
      <svg class="m4 me-2" width="7" height="5"><path d="M0 5l3.500-5L7 5z" fill="#999"/></svg>
      <span class="txt">特朗普被裁定性侵</span>
    </div>
    <div class="tk-go d-flex align-items-center justify-content-center txt">搜索一下</div>
    <div class="tk-bars"></div>
    <div class="app-btn run d-flex align-items-center justify-content-center"><svg width="32" height="34"><defs><linearGradient id="edgeG" x1="0" y1="0" x2="1" y2="1"><stop offset="0" stop-color="#35c1d8"/><stop offset="1" stop-color="#2fb56a"/></linearGradient></defs><circle cx="16" cy="17" r="15" fill="url(#edgeG)"/><path d="M1 17C1 8 8 2 16 2c-7 3-8 12-4 18 3 5 10 7 15 4-3 5-7 8-12 8C7 32 1 25 1 17z" fill="#0e5fb5"/><ellipse cx="20" cy="20" rx="6" ry="5" fill="#d3d3d3"/></svg></div>
    <div class="app-btn run d-flex align-items-center justify-content-center"><svg width="30" height="36" fill="none"><ellipse cx="15" cy="19" rx="12" ry="13" stroke="#6cc62d" stroke-width="4"/><path d="M4 19h22" stroke="#6cc62d" stroke-width="4"/><path d="M24 27l4-4" stroke="#d3d3d3" stroke-width="5"/><path d="M3 32C0 36 8 35 16 30s14-16 13-24c-1-4-7-5-12-2" stroke="#a8db7a" stroke-width="1.500"/></svg></div>
    <div class="app-btn run d-flex align-items-center justify-content-center"><svg width="28" height="33"><path d="M0 2h12l3 4H0z" fill="#e9a825"/><rect y="6" width="28" height="27" fill="#fbd75b"/><path d="M7 33V21h14v12h-4v-7h-6v7z" fill="#1c76c8"/></svg></div>
    <div class="app-btn run d-flex align-items-center justify-content-center"><svg width="30" height="36" fill="none"><circle cx="12" cy="11" r="10" fill="#f4e6e6" stroke="#e26a6a" stroke-width="1.500"/><circle cx="14" cy="20" r="6" stroke="#e26a6a"/><path d="M8 4l12 20M20 6L14 24" stroke="#888" stroke-width="1.500"/><circle cx="13" cy="29" r="3.500" stroke="#2f8fe6" stroke-width="1.500"/><circle cx="23" cy="29" r="3.500" stroke="#2f8fe6" stroke-width="1.500"/></svg></div>
    <div class="app-btn run act d-flex align-items-center justify-content-center"><svg width="30" height="34"><path d="M11 4h18v26H11z" fill="#fff" stroke="#1e7145"/><path d="M16 4v26M22 4v26M11 10h18M11 17h18M11 24h18" stroke="#1e7145"/><path d="M0 4l17-4v34L0 30z" fill="#1e7145"/><text x="3" y="23" font-family="Liberation Sans" font-weight="700" font-size="15" fill="#fff">X</text></svg></div>

    <div class="tray d-flex align-items-center">
      <div class="tr gap9 d-flex align-items-center justify-content-center"><svg width="20" height="20" fill="none" stroke="#222" stroke-width="1.200"><circle cx="6" cy="10" r="3.500"/><circle cx="13" cy="5" r="3.500"/><path d="M1 20c0-4 2-6 5-6s5 2 5 6M10 11c3-2 7 0 8 5"/></svg></div>
      <div class="tr gap22 d-flex align-items-center justify-content-center"><svg width="16" height="9" fill="none" stroke="#222" stroke-width="1.200"><path d="M.5 8.500L8 1l7.500 7.500"/></svg></div>
      <div class="tr d-flex align-items-center justify-content-center"><svg width="20" height="14"><path d="M1 0v3M4 0v3M0 3h5v3H3v3" fill="none" stroke="#111"/><rect x="5.500" y="2.500" width="14" height="10" fill="none" stroke="#111"/><rect x="7" y="4" width="11" height="7" fill="#111"/></svg></div>
      <div class="tr w30 d-flex align-items-center justify-content-center"><svg width="17" height="17" fill="none" stroke="#333" stroke-width="1.100"><path d="M1 16C1 8 8 1 16 1M4 16c0-6 6-12 12-12M8 16c0-4 3-8 8-8" stroke-dasharray="12 1.500"/><circle cx="14" cy="15" r="1.800" fill="#111" stroke="none"/></svg></div>
      <div class="tr w30 d-flex align-items-center justify-content-center"><svg width="20" height="16" fill="none" stroke="#222" stroke-width="1.100"><path d="M1 5.500h3L9 1v14l-5-4.500H1zM11 5c1.500 2 1.500 4 0 6"/><path d="M14 3c2.500 3 2.500 7 0 10M17 1.500c3.500 4 3.500 9 0 13" stroke="#999"/></svg></div>
      <div class="tr d-flex align-items-center justify-content-center"><svg width="21" height="20" fill="none" stroke="#111" stroke-width="1.300"><path d="M1 17c2 3 6 2 7-2l4-11c1-3 5-3 5 0s-4 6-8 8M10 13c4 0 9-1 10-4M15 2l-4 13"/></svg></div>
      <div class="tr d-flex align-items-center justify-content-center"><svg width="18" height="18" fill="#fff" stroke="#333"><path d="M7 .5h4v4h6.500v8H11v5H7v-5H.5v-8H7z"/><path d="M3 7h12v4H3z" fill="#d3d3d3"/></svg></div>
      <div class="tr d-flex align-items-center justify-content-center"><div class="sogou-s">S</div></div>
      <div class="clock"><div class="txt lh-base">17:41 周三</div><div class="txt lh-base">2023/5/10</div></div>
      <div class="vidbox d-flex align-items-center justify-content-center"><svg width="7" height="10"><path d="M0 0l7 5-7 5z" fill="#fff"/></svg><span class="vidn">5</span></div>
      <svg class="action" width="20" height="20" fill="none" stroke="#111" stroke-width="1.200"><path d="M.5 1h19v15h-7l-2.500 3-2.500-3h-7z"/></svg>
    </div>
  </div>

  <!-- floating things that sit over the window -->
  <div class="widget">
    <div class="wpill"></div>
    <svg class="wring" width="86" height="94"><circle cx="45" cy="44" r="40" fill="#7ee2a2" opacity=".85"/><circle cx="38" cy="52" r="37" fill="#7ee2a2" opacity=".85"/><circle cx="44" cy="47" r="36" fill="#2fce65"/><circle cx="43" cy="46" r="31" fill="#f5f5f5"/></svg>
    <div class="wpct">59<small>%</small></div>
    <svg class="wup" width="9" height="10" fill="none" stroke="#2f8cf5" stroke-width="1.500"><path d="M4.500 10V1M1 4.500l3.500-3.500L8 4.500"/></svg>
    <div class="wspeed">0K/s</div>
    <div class="wcpu">CPU <span>56°C</span></div>
    <div class="wplus d-flex align-items-center justify-content-center"><svg width="10" height="10" stroke="#fff" stroke-width="2.200"><path d="M5 0v10M0 5h10"/></svg></div>
  </div>

  <div class="pct-end">%</div>
  <div class="imebar d-flex align-items-center">
    <div class="ime-ico d-flex justify-content-center ime-zh">中</div>
    <div class="ime-ico d-flex justify-content-center"><svg width="16" height="16" fill="none" stroke="#0a6fd8"><circle cx="3" cy="5" r="2" stroke-width="1.500"/><path d="M12 9c1 1 0 4-3 6" stroke-width="2.500"/></svg></div>
    <div class="ime-ico d-flex justify-content-center"><svg width="16" height="22" fill="none" stroke="#0a6fd8" stroke-width="1.500"><rect x="4.500" y="0" width="7" height="14" rx="3.500" fill="#0a6fd8"/><path d="M1 9c0 9 14 9 14 0M8 17v4M4 21.500h8"/></svg></div>
    <div class="ime-ico d-flex justify-content-center"><svg width="18" height="15"><rect width="18" height="15" rx="2" fill="#0a6fd8"/><path d="M3 4h12M3 7.500h12" stroke="#fff" stroke-width="1.500" stroke-dasharray="1.500 1"/><path d="M5 11h8" stroke="#fff" stroke-width="1.500"/></svg></div>
    <div class="ime-ico d-flex justify-content-center"><svg width="19" height="17"><path d="M5 0h9l5 4-3 4-2-1v10H5V7L3 8 0 4z" fill="#0a6fd8"/></svg></div>
    <div class="ime-ico d-flex justify-content-center"><svg width="18" height="18"><circle cx="4.500" cy="4.500" r="4" fill="#8d7fe0"/><circle cx="13.500" cy="4.500" r="4" fill="#8d7fe0"/><circle cx="4.500" cy="13.500" r="4" fill="#9c7bcc"/><circle cx="13.500" cy="13.500" r="4" fill="#8d7fe0"/></svg></div>
  </div>
  <div class="sogou">S</div>
</div>

<script>
    const sheetTable = document.querySelector("#sheetTable");
    const colNames = "ABCDEFGHIJKLMNOPQRS".split("");
    const ddButton = '<span class="ddb d-flex align-items-center justify-content-center"><span class="tri"></span></span>';

    const cells = {
        A1: { html: "姓名", cls: "pv pvb" },
        B1: { html: `<div class="cellin"><span class="lbl">(全部)</span>${ddButton}</div>`, cls: "pv pvb boxed" },
        A3: { html: `<div class="cellin fw-bold"><span class="lbl">行标签</span>${ddButton}</div>`, cls: "pv pvb boxed" },
        B3: { html: "求和项:成交额", cls: "pv pvb fw" },
        A4: { html: "笔", cls: "" },
        B4: { html: "328", cls: "ra" },
        A5: { html: "书", cls: "bl" },
        B5: { html: '332<span class="fillh"></span>', cls: "ra cur" },
        A6: { html: "总计", cls: "pv fw" },
        B6: { html: "660", cls: "pv fw ra" }
    };

    let tableHtml = '<colgroup><col class="c0"><col class="c1"><col class="c2">';
    for (let i = 2; i < colNames.length; i++) {
        tableHtml += '<col class="cn">';
    }
    tableHtml += '</colgroup><thead><tr><th class="corner"><svg width="34" height="22"><path d="M31 4v14H17z" fill="#b5b5b5"/></svg></th>';
    for (let i = 0; i < colNames.length; i++) {
        tableHtml += `<th class="${colNames[i] === "B" ? "hsel" : ""}">${colNames[i]}</th>`;
    }
    tableHtml += "</tr></thead><tbody>";
    for (let r = 1; r <= 29; r++) {
        tableHtml += `<tr><th class="${r === 5 ? "hsel" : ""}">${r}</th>`;
        for (let c = 0; c < colNames.length; c++) {
            const cell = cells[colNames[c] + r];
            tableHtml += cell ? `<td class="${cell.cls}">${cell.html}</td>` : "<td></td>";
        }
        tableHtml += "</tr>";
    }
    sheetTable.innerHTML = tableHtml + "</tbody>";
</script>
</body>
</html>
